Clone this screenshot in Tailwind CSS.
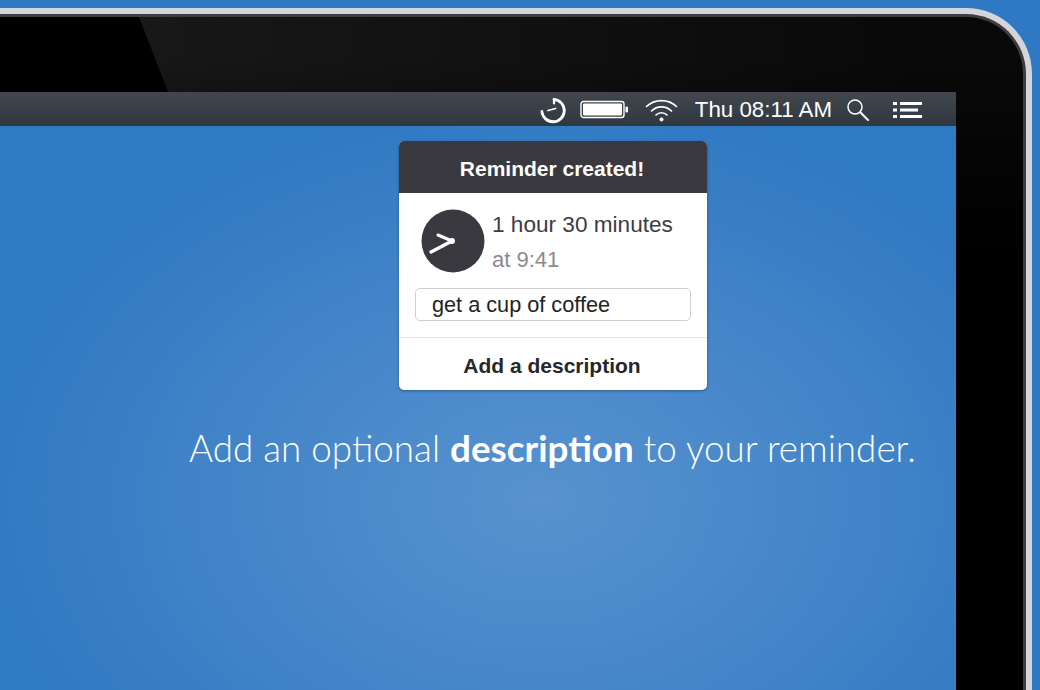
<!DOCTYPE html>
<html>
<head>
<meta charset="utf-8">
<script src="https://cdn.jsdelivr.net/npm/@tailwindcss/browser@4"></script>
</head>
<body class="m-0 h-[690px] w-[1040px] overflow-hidden bg-[#2f78c3] font-['Liberation_Sans',Arial,sans-serif]">
<div class="pt-[8px] pr-[8px] h-[690px] box-border">
  <!-- silver shell -->
  <div class="h-[682px] rounded-tr-[66px] bg-[#d3d5da] pt-[6px] pr-[6px] box-border">
    <!-- bezel -->
    <div class="relative h-[676px] rounded-tr-[60px] bg-[linear-gradient(to_bottom,transparent_40px,#000_240px),linear-gradient(to_right,#181818_140px,#090909_930px)] border-t-[3px] border-r-[3px] border-[#3c3d40] box-border overflow-hidden">
      <svg class="absolute left-0 top-0" width="170" height="75" viewBox="0 0 170 75"><polygon points="0,0 139,0 168,75 0,75" fill="#000"/></svg>
      <div class="relative mt-[75px] mr-[67px] h-[598px] flex flex-col bg-[radial-gradient(ellipse_560px_400px_at_540px_408px,#5892cf_0%,#4586c9_50%,#3079c3_100%)]">
        <!-- menu bar -->
        <div class="h-[34px] shrink-0 flex items-center justify-end bg-gradient-to-b from-[#43474d] to-[#2f3740] pr-[33px] pt-[2px] box-border text-white">
          <svg class="mr-[13px]" width="28" height="28" viewBox="0 0 28 28" fill="none" stroke="#fff" stroke-linecap="round"><path d="M15 3.4A11.2 11.2 0 1 1 2.9 15.5" stroke-width="2.8"/><path d="M15 3.6V7.5" stroke-width="2.2"/><path d="M9 14.5L16.5 12.5" stroke-width="1.8"/></svg>
          <svg class="mr-[16px]" width="49" height="20" viewBox="0 0 49 20" fill="none"><rect x="1" y="1.5" width="43" height="16" rx="2.5" stroke="#fff" stroke-width="1.4"/><rect x="3" y="3.5" width="39" height="12" rx="1" fill="#fff"/><rect x="45.5" y="6.5" width="2.5" height="6" rx="1" fill="#fff"/></svg>
          <svg class="mr-[17px]" width="33" height="25" viewBox="0 0 33 25" fill="none" stroke="#fff" stroke-width="1.7" stroke-linecap="round"><path d="M1.5 8.5C9.5 0.6 23.5 0.6 31.5 8.5"/><path d="M6.5 13C12 7.5 21 7.5 26.5 13"/><path d="M11 17C14 14 19 14 22 17"/><circle cx="16.5" cy="21.5" r="2" fill="#fff" stroke="none"/></svg>
          <span class="text-[22.3px] leading-none mr-[14px] whitespace-nowrap">Thu 08:11 AM</span>
          <svg class="mr-[23px]" width="24" height="24" viewBox="0 0 24 24" fill="none" stroke="#fff" stroke-linecap="round"><circle cx="9" cy="9" r="7" stroke-width="1.5"/><path d="M14.2 14.2L22 22" stroke-width="2"/></svg>
          <svg width="30" height="18" viewBox="0 0 30 18" fill="#fff"><rect x="0" y="1" width="4" height="3"/><rect x="0" y="7.5" width="4" height="3"/><rect x="0" y="14" width="4" height="3"/><rect x="7" y="1" width="22" height="3"/><rect x="7" y="7.5" width="18" height="3"/><rect x="7" y="14" width="22" height="3"/></svg>
        </div>
        <!-- popup -->
        <div class="ml-[399px] mt-[15px] w-[308px] h-[249px] shrink-0 rounded-[5px] bg-white overflow-hidden shadow-[0_1px_3px_rgba(0,0,0,0.35)] flex flex-col">
          <div class="h-[52px] shrink-0 bg-[#3a3940] flex items-center justify-center pt-[4px] pr-[2px] box-border text-white text-[21px] font-bold">Reminder created!</div>
          <div class="flex pl-[22px] pt-[16px] h-[94px] box-border shrink-0">
            <svg width="64" height="64" viewBox="0 0 64 64" class="shrink-0"><circle cx="32" cy="32" r="31.5" fill="#3a3940"/><path d="M31 32L17 26" stroke="#fff" stroke-width="3" stroke-linecap="round"/><path d="M31 32L10 43" stroke="#fff" stroke-width="3.4" stroke-linecap="round"/><circle cx="31" cy="32" r="3" fill="#fff"/></svg>
            <div class="ml-[7px]">
              <div class="text-[22.6px] leading-[32px] text-[#3d3c42] whitespace-nowrap">1 hour 30 minutes</div>
              <div class="text-[22px] leading-[24px] mt-[7px] text-[#8b8b8e] whitespace-nowrap">at 9:41</div>
            </div>
          </div>
          <div class="mx-[16px] mt-[1px] h-[33px] shrink-0 rounded-[5px] border border-[#cfcfcf] pl-[16px] pt-[2px] box-border flex items-center text-[21.7px] text-[#232326] whitespace-nowrap">get a cup of coffee</div>
          <div class="mt-[16px] border-t border-[#e8e8e8] flex-1 flex items-center justify-center pt-[3px] pr-[2px] box-border text-[21px] font-bold text-[#27272a]">Add a description</div>
        </div>
        <!-- headline -->
        <div class="mt-[34px] pl-[189px] text-[36.8px] leading-[48px] text-white font-['Lato',sans-serif] font-light whitespace-nowrap">Add an optional <span class="font-bold">description</span> to your reminder.</div>
      </div>
    </div>
  </div>
</div>
</body>
</html>
